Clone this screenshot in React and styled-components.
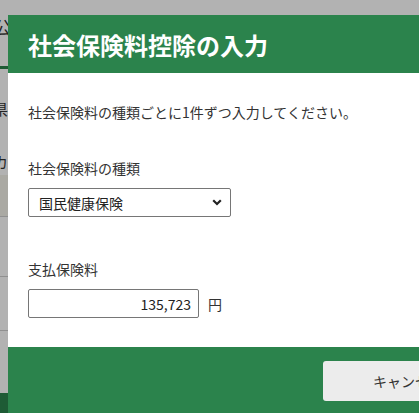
import React from 'react';
import styled, { createGlobalStyle } from 'styled-components';

const GlobalStyle = createGlobalStyle`
    html, body {
        margin: 0;
        padding: 0;
        background: #ffffff;
        font-family: "Noto Sans CJK JP", "Noto Sans", sans-serif;
        color: #333333;
        overflow: hidden;
    }
`;

/* page behind the dialog (only a sliver shows on the left) */
const Page = styled.div`
    width: 419px;
    height: 413px;
    display: flex;
    flex-direction: column;
    background: #ffffff;
`;

const PageHead = styled.div`
    height: 69px;
    padding-top: 14px;
    box-sizing: border-box;
    border-bottom: 3px solid #2b834c;
    font-size: 17px;
    margin-left: -6px;
`;

const PageRow = styled.div`
    height: ${(p) => p.$h}px;
    display: flex;
    align-items: center;
    font-size: 15px;
    margin-left: -7px;
    background: ${(p) => (p.$shade ? '#f4f3ea' : 'transparent')};
    border-bottom: ${(p) => (p.$line ? '1px solid #cfcfcf' : 'none')};
    box-sizing: border-box;
`;

const PageFoot = styled.div`
    margin-top: auto;
    height: 20px;
    background: #2b834c;
`;

const Backdrop = styled.div`
    position: fixed;
    inset: 0;
    background: rgba(0, 0, 0, 0.3);
`;

const Dialog = styled.div`
    position: fixed;
    left: 8px;
    top: 15px;
    width: 520px;
    background: #ffffff;
    display: flex;
    flex-direction: column;
`;

const Header = styled.h1`
    margin: 0;
    height: 58px;
    padding: 0 20px;
    display: flex;
    align-items: center;
    background: #2b834c;
    color: #ffffff;
    font-size: 24px;
    font-weight: 700;
`;

const Body = styled.div`
    padding: 29px 20px 29px;
    display: flex;
    flex-direction: column;
`;

const Intro = styled.p`
    margin: 0 0 35px;
    font-size: 14px;
    line-height: 21px;
    color: #333333;
`;

const Field = styled.div`
    display: flex;
    flex-direction: column;
    gap: 9px;
    margin-bottom: ${(p) => (p.$last ? 0 : 42)}px;
`;

const Label = styled.label`
    font-size: 14px;
    line-height: 21px;
    color: #333333;
`;

const SelectWrap = styled.div`
    position: relative;
    width: 203px;
`;

const Select = styled.select`
    appearance: none;
    width: 100%;
    height: 29px;
    box-sizing: border-box;
    border: 1px solid #767676;
    border-radius: 2px;
    background: #ffffff;
    padding: 0 28px 0 10px;
    font-family: inherit;
    font-size: 14px;
    color: #222222;
`;

const Chevron = styled.svg`
    position: absolute;
    right: 9px;
    top: 11px;
    pointer-events: none;
`;

const AmountRow = styled.div`
    display: flex;
    align-items: center;
    gap: 9px;
`;

const Amount = styled.input`
    width: 171px;
    height: 29px;
    box-sizing: border-box;
    border: 1px solid #767676;
    border-radius: 2px;
    padding: 0 7px;
    text-align: right;
    font-family: inherit;
    font-size: 14px;
    color: #222222;
`;

const Unit = styled.span`
    font-size: 14px;
    color: #333333;
`;

const Footer = styled.div`
    height: 70px;
    background: #2b834c;
    display: flex;
    align-items: flex-start;
    padding: 14px 0 0 315px;
`;

const Button = styled.button`
    width: 150px;
    height: 40px;
    border: none;
    border-radius: 3px;
    background: #ececec;
    font-family: inherit;
    font-size: 14px;
    color: #333333;
    text-align: left;
    padding-left: 50px;
`;

export default function App() {
    return (
        <>
            <GlobalStyle />
            <Page aria-hidden="true">
                <PageHead>公</PageHead>
                <PageRow $h={78}>県</PageRow>
                <PageRow $h={28}>カ</PageRow>
                <PageRow $h={42} $shade $line />
                <PageRow $h={60} $line />
                <PageRow $h={54} $line />
                <PageFoot />
            </Page>
            <Backdrop />
            <Dialog>
                <Header>社会保険料控除の入力</Header>
                <Body>
                    <Intro>社会保険料の種類ごとに1件ずつ入力してください。</Intro>
                    <Field>
                        <Label>社会保険料の種類</Label>
                        <SelectWrap>
                            <Select defaultValue="kokumin">
                                <option value="kokumin">国民健康保険</option>
                                <option value="kenko">健康保険</option>
                                <option value="nenkin">国民年金</option>
                            </Select>
                            <Chevron width="10" height="7" viewBox="0 0 10 7">
                                <path d="M1.2 1.2 L5 5 L8.8 1.2" fill="none" stroke="#222" strokeWidth="2.2" />
                            </Chevron>
                        </SelectWrap>
                    </Field>
                    <Field $last>
                        <Label>支払保険料</Label>
                        <AmountRow>
                            <Amount defaultValue="135,723" />
                            <Unit>円</Unit>
                        </AmountRow>
                    </Field>
                </Body>
                <Footer>
                    <Button>キャンセル</Button>
                </Footer>
            </Dialog>
        </>
    );
}
